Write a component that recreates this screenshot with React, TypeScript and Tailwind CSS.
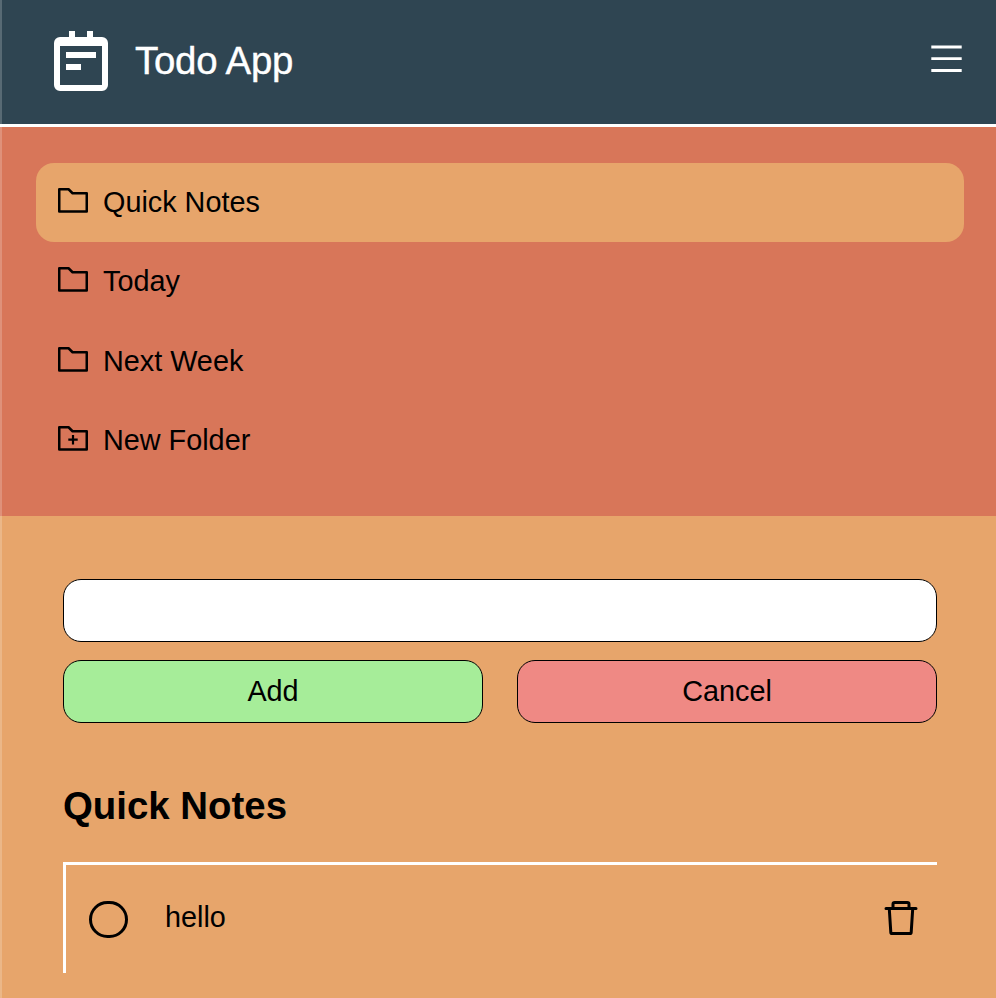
import { useState } from "react";

function LogoIcon() {
  return (
    <svg width="54" height="60" viewBox="0 0 54 60" fill="currentColor">
      <path
        fillRule="evenodd"
        d="M15 0h6v6h12V0h6v6h9a6 6 0 0 1 6 6v42a6 6 0 0 1-6 6v0H6a6 6 0 0 1-6-6V12a6 6 0 0 1 6-6h9ZM6 15v39h42V15Z"
        className="hidden"
      />
      <path d="M15 0h6v7h-6zM33 0h6v7h-6zM12 21h30v6H12zM12 33h15v6H12z" />
      <path
        fillRule="evenodd"
        d="M6 6h42a6 6 0 0 1 6 6v42a6 6 0 0 1-6 6H6a6 6 0 0 1-6-6V12a6 6 0 0 1 6-6ZM6 15v39h42V15Z"
      />
    </svg>
  );
}

function MenuIcon() {
  return (
    <svg width="31" height="28" viewBox="0 0 31 28" fill="currentColor">
      <path d="M.3.6h30.4v2.8H.3zM.3 12.3h30.4v2.8H.3zM.3 24h30.4v3H.3z" />
    </svg>
  );
}

function FolderIcon({ plus = false }: { plus?: boolean }) {
  return (
    <svg width="30" height="25" viewBox="0 0 30 25" fill="none" stroke="currentColor" strokeWidth="2.5">
      <path d="M1.25 1.25h9.3l4 4h14.2v18.2H1.25Z" strokeLinejoin="round" />
      {plus && <path d="M10.3 13.7h9.4M15 9v9.4" strokeWidth="2.2" />}
    </svg>
  );
}

function TrashIcon() {
  return (
    <svg
      width="34"
      height="36"
      viewBox="0 0 34 36"
      fill="none"
      stroke="currentColor"
      strokeWidth="3"
      strokeLinecap="round"
      strokeLinejoin="round"
    >
      <path d="M2 8.5h30M5.3 9l1.5 23.3q.1 1.2 1.3 1.2h17.8q1.2 0 1.3-1.2L28.7 9M9 8V4.3Q9 2.5 10.8 2.5h12.4Q25 2.5 25 4.3V8" />
    </svg>
  );
}

const folders = ["Quick Notes", "Today", "Next Week", "New Folder"];

export default function App() {
  const [active, setActive] = useState("Quick Notes");
  return (
    <div className="relative flex h-[998px] w-[996px] flex-col overflow-hidden bg-[#e7a56b] font-['Liberation_Sans',Arial,sans-serif] text-[28.8px] text-black">
      <header className="flex h-[127px] shrink-0 items-start justify-between border-b-[3px] border-white bg-[#2f4552] pr-[34px] pl-[54px] text-white">
        <div className="flex pt-[31px]">
          <LogoIcon />
          <h1 className="ml-[27px] text-[38.4px] leading-[60px] tracking-[-0.25px] [-webkit-text-stroke:0.4px_white]">Todo App</h1>
        </div>
        <button aria-label="Menu" className="pt-[45px]">
          <MenuIcon />
        </button>
      </header>
      <nav className="flex h-[389px] shrink-0 flex-col bg-[#d87659] px-[36px] pt-[36px] pr-[32px]">
        {folders.map((name) => (
          <button
            key={name}
            onClick={() => setActive(name)}
            className={`flex h-[79.3px] shrink-0 items-start rounded-[18px] pl-[22px] text-left ${
              name === active ? "bg-[#e7a56b]" : ""
            }`}
          >
            <span className="pt-[25px]">
              <FolderIcon plus={name === "New Folder"} />
            </span>
            <span className="ml-[15px] leading-[78px]">{name}</span>
          </button>
        ))}
      </nav>
      <main className="flex flex-col pt-[63px] pr-[59px] pl-[63px]">
        <input aria-label="Task" className="h-[63px] rounded-[18px] border border-black bg-white px-4 outline-none" />
        <div className="mt-[18px] grid grid-cols-2 gap-[34px]">
          <button className="h-[63px] rounded-[18px] border border-black bg-[#a6ed99]">Add</button>
          <button className="h-[63px] rounded-[18px] border border-black bg-[#ef8984]">Cancel</button>
        </div>
        <h2 className="mt-[60px] text-[38.4px] leading-[46px] font-bold">Quick Notes</h2>
        <div className="mt-[33px] flex h-[111px] items-start border-t-[3px] border-l-[3px] border-white pl-[23px]">
          <button aria-label="Complete" className="mt-[36px] h-[37px] w-[39px] rounded-full border-[3.5px] border-black" />
          <span className="ml-[37px] pt-[35px] leading-[34px]">hello</span>
          <button aria-label="Delete" className="mt-[35px] mr-[19px] ml-auto">
            <TrashIcon />
          </button>
        </div>
      </main>
      <div className="pointer-events-none absolute inset-y-0 left-0 w-[2px] bg-white/20" />
    </div>
  );
}
